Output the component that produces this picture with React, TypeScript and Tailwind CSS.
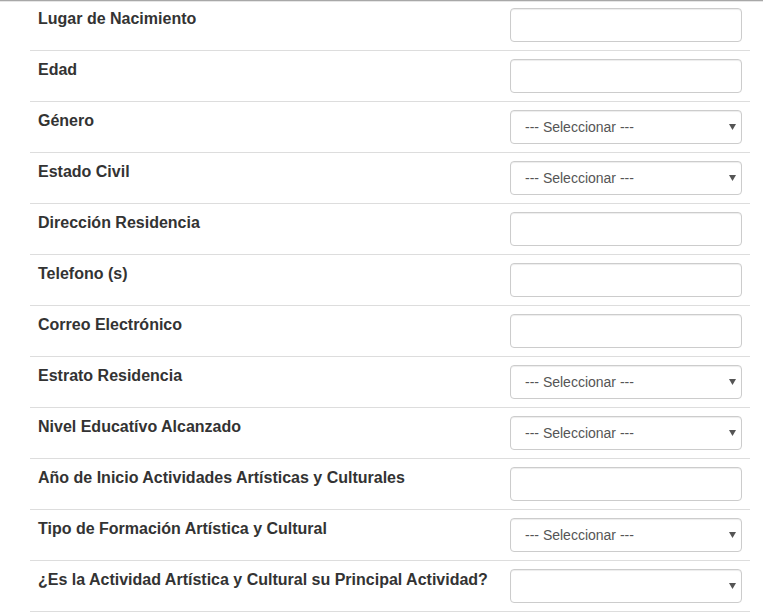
const FIELDS: { label: string; kind: "text" | "select"; placeholder?: string }[] = [
  { label: "Lugar de Nacimiento", kind: "text" },
  { label: "Edad", kind: "text" },
  { label: "Género", kind: "select", placeholder: "--- Seleccionar ---" },
  { label: "Estado Civil", kind: "select", placeholder: "--- Seleccionar ---" },
  { label: "Dirección Residencia", kind: "text" },
  { label: "Telefono (s)", kind: "text" },
  { label: "Correo Electrónico", kind: "text" },
  { label: "Estrato Residencia", kind: "select", placeholder: "--- Seleccionar ---" },
  { label: "Nivel Educatívo Alcanzado", kind: "select", placeholder: "--- Seleccionar ---" },
  { label: "Año de Inicio Actividades Artísticas y Culturales", kind: "text" },
  { label: "Tipo de Formación Artística y Cultural", kind: "select", placeholder: "--- Seleccionar ---" },
  { label: "¿Es la Actividad Artística y Cultural su Principal Actividad?", kind: "select", placeholder: "" },
];

function Field({ kind, placeholder }: { kind: "text" | "select"; placeholder?: string }) {
  if (kind === "text") {
    return (
      <input
        type="text"
        className="h-[34px] w-[232px] rounded-[4px] border border-[#cccccc] bg-white px-3 text-[14px] text-[#555] shadow-[inset_0_1px_1px_rgba(0,0,0,0.075)] outline-none"
      />
    );
  }
  return (
    <div className="relative h-[34px] w-[232px]">
      <select className="h-[34px] w-full appearance-none rounded-[4px] border border-[#cccccc] bg-white pl-[14px] pr-6 text-[14px] text-[#555] shadow-[inset_0_1px_1px_rgba(0,0,0,0.075)] outline-none">
        <option>{placeholder}</option>
      </select>
      <svg
        className="pointer-events-none absolute right-[6px] top-[14px]"
        width="7"
        height="6"
        viewBox="0 0 7 6"
      >
        <path d="M0 0h7L3.5 6z" fill="#555" />
      </svg>
    </div>
  );
}

export default function App() {
  return (
    <div className="min-h-[614px] w-[763px] bg-white font-['Liberation_Sans',Arial,sans-serif]">
      <div className="h-px bg-[#a8a8a8]" />
      <div className="h-px bg-[#e6e6e6]" />
      <div className="-mt-[2px] ml-[30px] w-[720px]">
        {FIELDS.map((f) => (
          <div key={f.label} className="flex border-b border-[#dddddd]">
            <div className="w-[472px] px-2 pt-[9px] text-[16px] font-bold leading-[20px] text-[#333333]">
              {f.label}
            </div>
            <div className="p-2">
              <Field kind={f.kind} placeholder={f.placeholder} />
            </div>
          </div>
        ))}
      </div>
    </div>
  );
}
